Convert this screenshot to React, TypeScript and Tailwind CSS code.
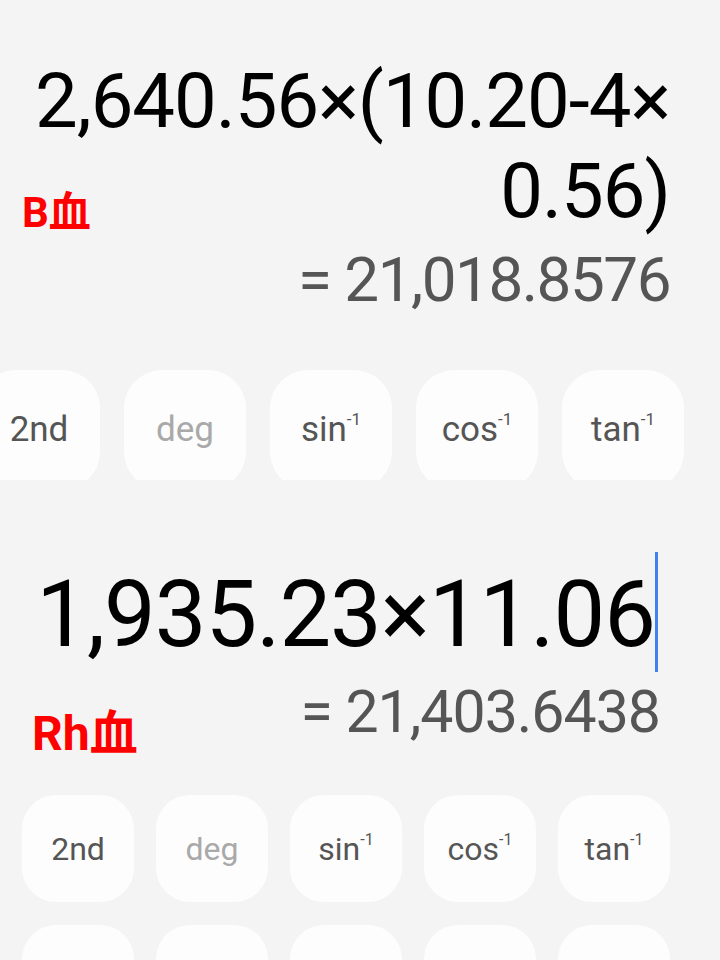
import type { ReactNode } from 'react';

type Key = { label: string; sup?: string; muted?: boolean };

const sciKeys: Key[] = [
  { label: '2nd' },
  { label: 'deg', muted: true },
  { label: 'sin', sup: '-1' },
  { label: 'cos', sup: '-1' },
  { label: 'tan', sup: '-1' },
];

function KeyLabel({ k, big }: { k: Key; big: boolean }) {
  return (
    <span className={k.muted ? 'text-[#a9a9a9]' : 'text-[#555555]'}>
      {k.label}
      {k.sup && (
        <span
          className={
            big
              ? 'relative -top-[16px] text-[17px]'
              : 'relative -top-[15px] text-[16px]'
          }
        >
          {k.sup}
        </span>
      )}
    </span>
  );
}

function Label({ children, className }: { children: ReactNode; className: string }) {
  return <div className={`font-bold text-[#ff0000] ${className}`}>{children}</div>;
}

function App() {
  return (
    <div className="w-[720px] h-[960px] overflow-hidden bg-[#f4f4f4] font-['Roboto','Noto_Sans_CJK_SC',sans-serif]">
      {/* first calculator: wrapped expression */}
      <section className="h-[480px] overflow-hidden pt-[56px]">
        <div className="pr-[50px] text-right text-[76px] leading-[90px] tracking-[-1px] text-black">
          2,640.56×(10.20-4×
        </div>
        <div className="flex items-start justify-between pl-[22px] pr-[50px]">
          <Label className="mt-[46px] text-[42px] leading-[42px]">B血</Label>
          <div className="text-[76px] leading-[90px] tracking-[-1px] text-black">0.56)</div>
        </div>
        <div className="mt-[8px] pr-[50px] text-right text-[62px] leading-[72px] tracking-[-1.5px] text-[#555555]">
          = 21,018.8576
        </div>
        <div className="mt-[54px] -ml-[22px] flex gap-[24px]">
          {sciKeys.map((k) => (
            <div
              key={k.label}
              className="flex h-[120px] w-[122px] shrink-0 items-center justify-center rounded-[38px] bg-[#fdfdfd] text-[35px]"
            >
              <KeyLabel k={k} big />
            </div>
          ))}
        </div>
      </section>

      {/* second calculator: active input with cursor */}
      <section className="h-[480px] overflow-hidden pt-[75px]">
        <div className="flex items-start justify-end pr-[62px]">
          <span className="text-[92px] leading-[120px] tracking-[-1px] text-black">1,935.23×11.06</span>
          <div className="-mt-[3px] h-[120px] w-[3px] bg-[#3f82ee]" />
        </div>
        <div className="mt-[2px] flex items-start justify-between pl-[32px] pr-[60px]">
          <Label className="mt-[33px] text-[48px] leading-[48px]">Rh血</Label>
          <div className="text-[59px] leading-[70px] tracking-[-1px] text-[#555555]">
            = 21,403.6438
          </div>
        </div>
        <div className="mt-[37px] grid grid-cols-5 gap-x-[22px] gap-y-[23px] pl-[22px] pr-[50px]">
          {sciKeys.map((k) => (
            <div
              key={k.label}
              className="flex h-[107px] items-center justify-center rounded-[34px] bg-[#fdfdfd] text-[32px]"
            >
              <KeyLabel k={k} big={false} />
            </div>
          ))}
          {sciKeys.map((k) => (
            <div key={`row2-${k.label}`} className="h-[107px] rounded-[34px] bg-[#fdfdfd]" />
          ))}
        </div>
      </section>
    </div>
  );
}

export default App;
